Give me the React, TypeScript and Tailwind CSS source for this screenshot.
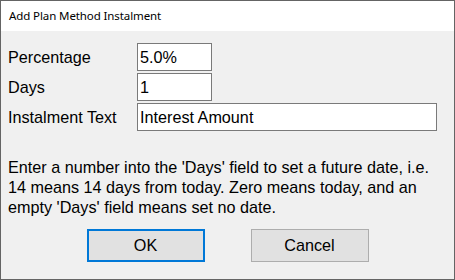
const fields = [
  { label: 'Percentage', value: '5.0%', width: 'w-[75px]' },
  { label: 'Days', value: '1', width: 'w-[75px]' },
  { label: 'Instalment Text', value: 'Interest Amount', width: 'w-[300px]' },
];

export default function App() {
  return (
    <div className="w-[455px] h-[280px] flex flex-col border border-[#646464] bg-[#f0f0f0] overflow-hidden">
      {/* Title bar */}
      <div
        className="h-[30px] shrink-0 flex items-center pl-[8px] bg-white text-[11.5px] tracking-[-0.1px] text-black"
        style={{ fontFamily: '"Noto Sans", "Open Sans", sans-serif' }}
      >
        Add Plan Method Instalment
      </div>

      <div
        className="flex-1 flex flex-col text-[16.2px] text-black"
        style={{ fontFamily: '"Liberation Sans", Arial, sans-serif' }}
      >
        {/* Fields */}
        <div className="flex flex-col gap-[2px] pt-[12px] pl-[7px]">
          {fields.map((f) => (
            <div key={f.label} className="flex items-center h-[28px]">
              <span className="w-[129px] shrink-0">{f.label}</span>
              <input
                readOnly
                value={f.value}
                className={`${f.width} h-[28px] border border-[#7a7a7a] bg-white pl-[2px] outline-none text-[16.2px] text-black`}
                style={{ fontFamily: '"Liberation Sans", Arial, sans-serif' }}
              />
            </div>
          ))}
        </div>

        {/* Help text */}
        <p className="mt-[26px] pl-[7px] leading-[20px]">
          Enter a number into the 'Days' field to set a future date, i.e.
          <br />
          14 means 14 days from today. Zero means today, and an
          <br />
          empty 'Days' field means set no date.
        </p>

        {/* Buttons */}
        <div className="flex justify-center gap-[46px] mt-[12px]">
          <button className="w-[118px] h-[33px] bg-[#e1e1e1] border-2 border-[#0078d7] text-[16.2px] text-black">
            OK
          </button>
          <button className="w-[118px] h-[33px] bg-[#e1e1e1] border border-[#adadad] text-[16.2px] text-black">
            Cancel
          </button>
        </div>
      </div>
    </div>
  );
}
